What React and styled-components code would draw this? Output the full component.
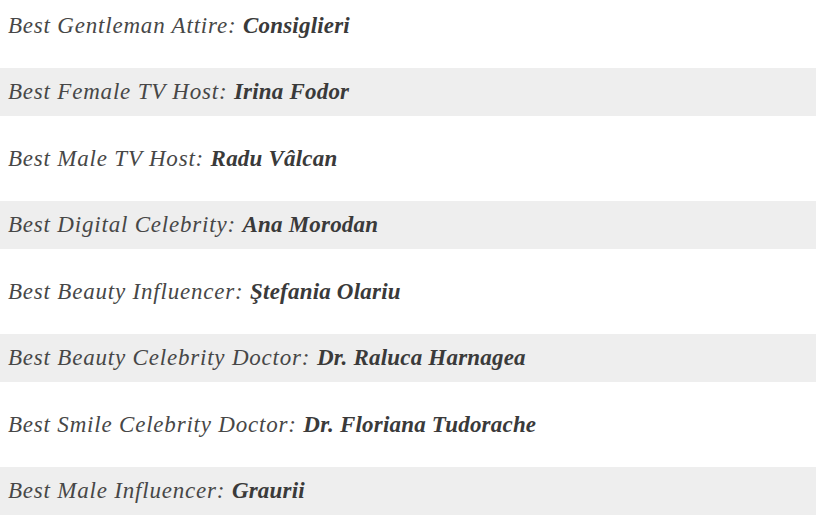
import React from "react";
import styled, { createGlobalStyle } from "styled-components";

const GlobalStyle = createGlobalStyle`
  html, body {
    margin: 0;
    padding: 0;
    background: #ffffff;
  }
`;

const List = styled.ul`
  list-style: none;
  margin: 0;
  padding: 1.5px 0 0 0;
  width: 816px;
  font-family: "Liberation Serif", "Times New Roman", serif;
`;

const Row = styled.li`
  height: 47.5px;
  line-height: 47px;
  margin-bottom: 19px;
  padding-left: 8px;
  background: ${(p) => (p.shaded ? "#eeeeee" : "transparent")};
  color: #474747;
  font-size: 23px;
  font-style: italic;
  letter-spacing: 0.8px;
  white-space: nowrap;
`;

const Name = styled.strong`
  font-weight: 700;
  color: #3a3a3a;
  letter-spacing: 0.2px;
`;

const awards = [
  ["Best Gentleman Attire:", "Consiglieri"],
  ["Best Female TV Host:", "Irina Fodor"],
  ["Best Male TV Host:", "Radu Vâlcan"],
  ["Best Digital Celebrity:", "Ana Morodan"],
  ["Best Beauty Influencer:", "Ştefania Olariu"],
  ["Best Beauty Celebrity Doctor:", "Dr. Raluca Harnagea"],
  ["Best Smile Celebrity Doctor:", "Dr. Floriana Tudorache"],
  ["Best Male Influencer:", "Graurii"],
];

export default function App() {
  return (
    <>
      <GlobalStyle />
      <List>
        {awards.map(([label, name], i) => (
          <Row key={label} shaded={i % 2 === 1}>
            {label} <Name>{name}</Name>
          </Row>
        ))}
      </List>
    </>
  );
}
